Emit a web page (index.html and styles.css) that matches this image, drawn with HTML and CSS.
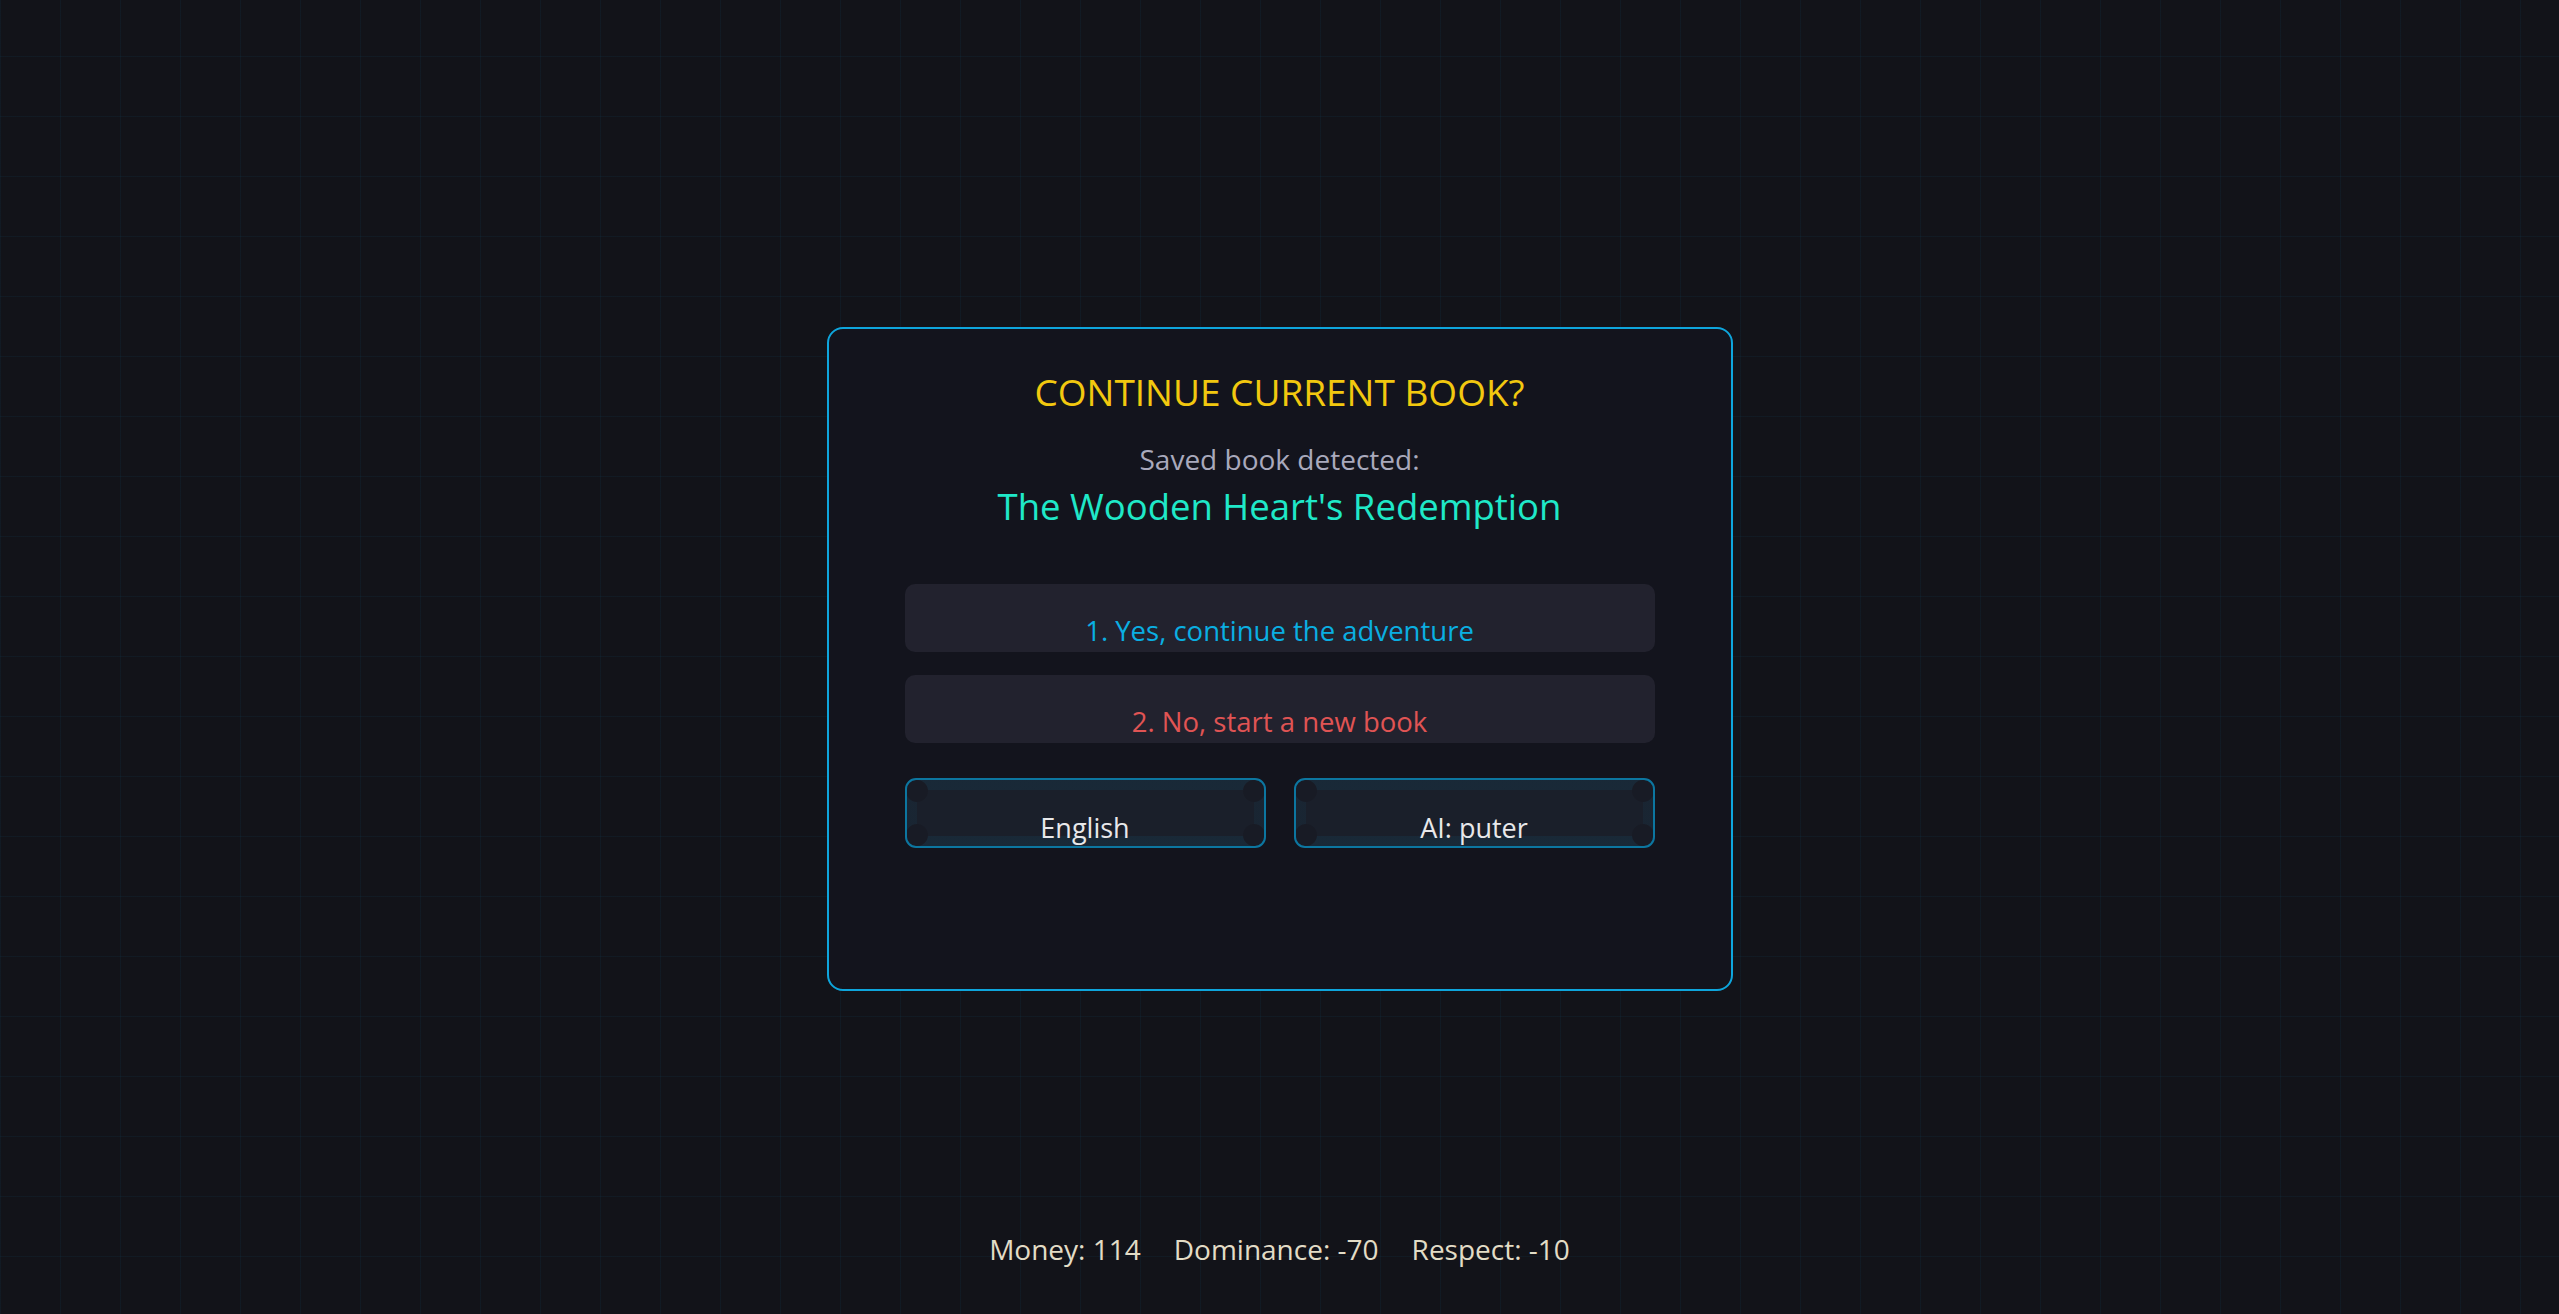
FILE: index.html
```html
<!DOCTYPE html>
<html lang="en">
<head>
<meta charset="utf-8">
<title>Continue current book?</title>
<link rel="stylesheet" href="styles.css">
</head>
<body>
<div class="page">
  <div class="top-space"></div>
  <section class="dialog">
    <h1 class="dialog-title">CONTINUE CURRENT BOOK?</h1>
    <p class="saved-label">Saved book detected:</p>
    <p class="book-title">The Wooden Heart's Redemption</p>
    <div class="options">
      <div class="option option-yes">1. Yes, continue the adventure</div>
      <div class="option option-no">2. No, start a new book</div>
    </div>
    <div class="settings">
      <div class="setting-btn">English</div>
      <div class="setting-btn">AI: puter</div>
    </div>
  </section>
  <footer class="stats">
    <span class="stat">Money: 114</span>
    <span class="stat">Dominance: -70</span>
    <span class="stat">Respect: -10</span>
  </footer>
</div>
</body>
</html>
```
FILE: styles.css
```css
* { box-sizing: border-box; }

html, body {
  margin: 0;
  padding: 0;
  height: 100%;
}

body {
  background-color: #121319;
  background-image:
    linear-gradient(to right, rgba(14, 165, 233, 0.05) 1px, transparent 1px),
    linear-gradient(to bottom, rgba(14, 165, 233, 0.05) 1px, transparent 1px);
  background-size: 60px 60px;
  background-position: 0 56px;
  font-family: "Open Sans", "Noto Sans", sans-serif;
  overflow: hidden;
}

.page {
  height: 100vh;
  display: grid;
  grid-template-rows: 1fr auto 1fr;
  justify-items: center;
}

.dialog {
  width: 906px;
  margin-top: 4px;
  background: #13141d;
  border: 2px solid #0ea5dc;
  border-radius: 16px;
  padding: 39px 76px 141px;
  text-align: center;
}

.dialog-title {
  margin: 0;
  font-size: 37px;
  line-height: 48px;
  font-weight: 400;
  color: #f2c80f;
}

.saved-label {
  margin: 25px 0 0;
  font-size: 28px;
  line-height: 36px;
  color: #a9a9bc;
}

.book-title {
  margin: 6px 0 0;
  font-size: 36.5px;
  line-height: 46px;
  color: #1fe8c8;
}

.options {
  margin-top: 55px;
  display: flex;
  flex-direction: column;
  gap: 23px;
}

.option {
  height: 68px;
  padding: 30px 0 4px;
  background: #22222e;
  border-radius: 10px;
  font-size: 27.5px;
  line-height: 34px;
}

.option-yes { color: #0aafe2; }
.option-no { color: #e05454; }

.settings {
  margin-top: 35px;
  display: grid;
  grid-template-columns: 1fr 1fr;
  gap: 28px;
}

.setting-btn {
  height: 70px;
  padding: 31px 0 1px;
  border: 2px solid #0c76a0;
  border-radius: 11px;
  background-color: #1a1f2a;
  background-image:
    radial-gradient(circle 11px at 10px 11px, #181b25 10.5px, transparent 11.5px),
    radial-gradient(circle 11px at calc(100% - 10px) 11px, #181b25 10.5px, transparent 11.5px),
    radial-gradient(circle 11px at 10px calc(100% - 11px), #181b25 10.5px, transparent 11.5px),
    radial-gradient(circle 11px at calc(100% - 10px) calc(100% - 11px), #181b25 10.5px, transparent 11.5px),
    linear-gradient(to bottom, rgba(14, 140, 190, 0.09) 0, rgba(14, 140, 190, 0.09) 10px, transparent 10px, transparent calc(100% - 10px), rgba(14, 140, 190, 0.09) calc(100% - 10px)),
    linear-gradient(to right, rgba(14, 140, 190, 0.06) 0, rgba(14, 140, 190, 0.06) 10px, transparent 10px, transparent calc(100% - 10px), rgba(14, 140, 190, 0.06) calc(100% - 10px));
  font-size: 27px;
  line-height: 34px;
  color: #e8e8ea;
  text-align: center;
}

.stats {
  align-self: end;
  display: flex;
  gap: 33px;
  padding-bottom: 46px;
  font-size: 28px;
  line-height: 38px;
  color: #e2dcc6;
}
```
